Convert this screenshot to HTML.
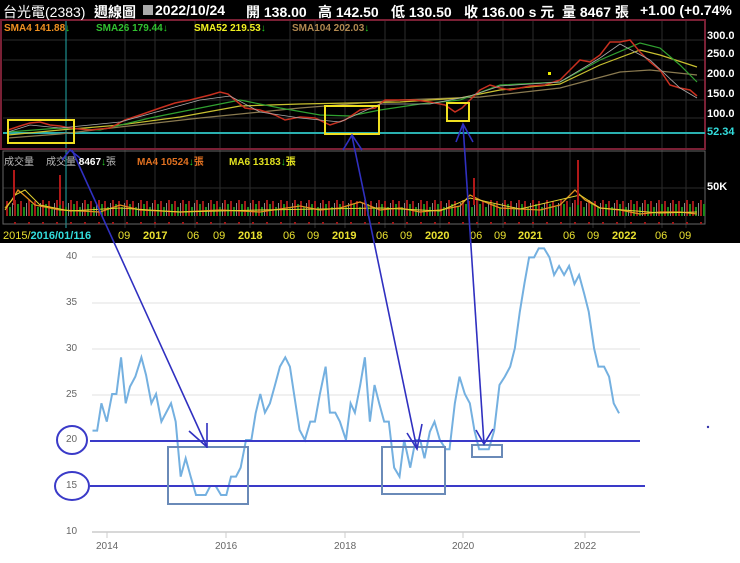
<!DOCTYPE html>
<html><head><meta charset="utf-8"><style>
*{margin:0;padding:0}
body{width:740px;height:563px;background:#fff;position:relative;overflow:hidden;font-family:"Liberation Sans","Noto Sans CJK TC",sans-serif}
#top{position:absolute;left:0;top:0;width:740px;height:243px;background:#000}
.t{position:absolute;white-space:nowrap;color:#fff;font-weight:bold;font-size:14px;top:2px}
.s{position:absolute;white-space:nowrap;font-weight:bold;font-size:10px;top:23px}
.d{position:absolute;white-space:nowrap;font-weight:bold;font-size:11px;top:230px;color:#e8e030}
.r{position:absolute;white-space:nowrap;font-weight:bold;font-size:11px;color:#fff;left:707px}
.g{position:absolute;font-size:10px;color:#666}
</style></head><body>
<div id="top">
<svg width="740" height="243" style="position:absolute;left:0;top:0">
<defs><pattern id="vb" width="14" height="24" patternUnits="userSpaceOnUse">
<rect x="0" y="6" width="2" height="18" fill="#a01818"/><rect x="3" y="12" width="2" height="12" fill="#1a8a1a"/><rect x="6" y="9" width="2" height="15" fill="#a01818"/><rect x="9" y="15" width="2" height="9" fill="#1a8a1a"/><rect x="12" y="11" width="1" height="13" fill="#888"/></pattern></defs>
<g stroke="#2b2b2b" stroke-width="1">
<line x1="66" y1="21" x2="66" y2="228"/><line x1="125" y1="21" x2="125" y2="228"/><line x1="155" y1="21" x2="155" y2="228"/><line x1="195" y1="21" x2="195" y2="228"/><line x1="220" y1="21" x2="220" y2="228"/><line x1="250" y1="21" x2="250" y2="228"/><line x1="290" y1="21" x2="290" y2="228"/><line x1="315" y1="21" x2="315" y2="228"/><line x1="345" y1="21" x2="345" y2="228"/><line x1="385" y1="21" x2="385" y2="228"/><line x1="405" y1="21" x2="405" y2="228"/><line x1="440" y1="21" x2="440" y2="228"/><line x1="478" y1="21" x2="478" y2="228"/><line x1="503" y1="21" x2="503" y2="228"/><line x1="533" y1="21" x2="533" y2="228"/><line x1="570" y1="21" x2="570" y2="228"/><line x1="593" y1="21" x2="593" y2="228"/><line x1="625" y1="21" x2="625" y2="228"/><line x1="662" y1="21" x2="662" y2="228"/><line x1="686" y1="21" x2="686" y2="228"/>
<line x1="3" y1="40" x2="705" y2="40"/><line x1="3" y1="60" x2="705" y2="60"/><line x1="3" y1="80" x2="705" y2="80"/><line x1="3" y1="100" x2="705" y2="100"/><line x1="3" y1="118" x2="705" y2="118"/><line x1="3" y1="188" x2="705" y2="188"/>
</g>
<line x1="66" y1="21" x2="66" y2="228" stroke="#2aa" />
<rect x="1" y="20" width="704" height="129" fill="none" stroke="#7a2035" stroke-width="2"/>
<rect x="3" y="151" width="702" height="73" fill="none" stroke="#666" stroke-width="1"/>
<line x1="3" y1="133" x2="705" y2="133" stroke="#2ab0b0" stroke-width="2"/>
<polyline fill="none" stroke="#8a7a50" stroke-width="1.2" points="8,138 60,134 120,127 200,118 300,108 400,100 480,97 560,88 620,72 650,70 697,75"/>
<polyline fill="none" stroke="#c8c030" stroke-width="1.2" points="8,135 60,130 120,125 180,117 240,106 300,104 350,103 400,102 460,98 500,90 560,84 600,65 640,50 660,55 697,67"/>
<polyline fill="none" stroke="#30a030" stroke-width="1.2" points="8,132 60,128 100,130 150,118 200,108 240,100 280,108 320,115 350,116 380,110 420,104 460,100 500,85 560,82 600,60 640,43 660,48 680,65 697,82"/>
<polyline fill="none" stroke="#c83020" stroke-width="1.5" points="8,130 20,126 30,123 40,122 50,125 60,126 70,128 90,130 110,128 125,120 140,115 160,108 175,103 190,100 210,95 220,92 228,94 235,100 245,108 260,110 275,115 285,120 300,117 315,118 330,125 345,120 360,110 375,108 385,100 400,100 415,100 430,102 445,105 455,112 462,108 470,100 480,90 490,85 500,88 510,90 530,86 545,85 560,80 570,70 580,60 590,62 600,55 610,42 620,42 630,40 640,52 650,62 660,70 670,85 680,88 690,90 697,96"/>
<polyline fill="none" stroke="#aaa" stroke-width="0.8" points="8,132 30,125 60,128 120,122 200,100 230,96 260,112 300,118 340,122 380,104 430,104 470,96 500,86 560,82 600,58 620,44 650,60 680,88 697,98"/>
<rect x="548" y="72" width="3" height="3" fill="#ee0"/>
<rect x="8" y="120" width="66" height="23" fill="none" stroke="#f0e020" stroke-width="2"/>
<rect x="325" y="106" width="54" height="28" fill="none" stroke="#f0e020" stroke-width="2"/>
<rect x="447" y="103" width="22" height="18" fill="none" stroke="#f0e020" stroke-width="2"/>
<rect x="5" y="200" width="700" height="24" fill="url(#vb)"/>
<polyline fill="none" stroke="#e09020" stroke-width="1.3" points="5,208 12,200 18,190 25,196 35,205 60,210 100,212 120,205 140,210 180,212 220,210 260,212 300,206 320,210 340,208 360,202 380,210 400,208 420,212 440,210 460,206 470,195 480,200 500,208 540,210 560,205 575,190 585,200 600,208 620,210 640,214 660,212 680,212 697,214"/>
<polyline fill="none" stroke="#e0d030" stroke-width="1" points="5,210 15,195 25,190 40,205 70,211 120,208 180,212 260,210 320,209 380,208 440,211 470,198 520,209 580,195 600,208 660,213 697,212"/>
<line x1="60" y1="175" x2="60" y2="205" stroke="#b01818" stroke-width="2"/>
<line x1="578" y1="160" x2="578" y2="205" stroke="#b01818" stroke-width="2"/>
<line x1="14" y1="170" x2="14" y2="205" stroke="#b01818" stroke-width="2"/>
<line x1="474" y1="178" x2="474" y2="205" stroke="#b01818" stroke-width="2"/>
</svg>
<div class="t" style="left:3px;font-weight:normal">台光電(2383)</div>
<div class="t" style="left:94px">週線圖</div>
<div style="position:absolute;left:143px;top:5px;width:10px;height:10px;background:#aaa"></div>
<div class="t" style="left:155px">2022/10/24</div>
<div class="t" style="left:246px">開 138.00</div>
<div class="t" style="left:318px">高 142.50</div>
<div class="t" style="left:391px">低 130.50</div>
<div class="t" style="left:464px">收 136.00 s 元</div>
<div class="t" style="left:562px">量 8467 張</div>
<div class="t" style="left:640px">+1.00 (+0.74%</div>
<div class="s" style="left:4px;top:23px;color:#f09020">SMA4 141.88<span style="color:#2c2">↓</span></div>
<div class="s" style="left:96px;color:#30c030">SMA26 179.44<span style="color:#2c2">↓</span></div>
<div class="s" style="left:194px;color:#f0f020">SMA52 219.53<span style="color:#2c2">↓</span></div>
<div class="s" style="left:292px;color:#b08850">SMA104 202.03<span style="color:#2c2">↓</span></div>
<div class="r" style="top:30px">300.0</div>
<div class="r" style="top:48px">250.0</div>
<div class="r" style="top:68px">200.0</div>
<div class="r" style="top:88px">150.0</div>
<div class="r" style="top:108px">100.0</div>
<div class="r" style="top:126px;color:#3dd">52.34</div>
<div class="r" style="top:181px">50K</div>
<div class="s" style="left:4px;top:153px;color:#bbb;font-weight:normal">成交量</div>
<div class="s" style="left:46px;top:153px;color:#bbb;font-weight:normal">成交量 <b style="color:#fff">8467</b><span style="color:#2c2">↓</span>張</div>
<div class="s" style="left:137px;top:153px;color:#e07020">MA4 10524<span style="color:#2c2">↓</span>張</div>
<div class="s" style="left:229px;top:153px;color:#e0e020">MA6 13183<span style="color:#2c2">↓</span>張</div>
<div class="d" style="left:3px;font-weight:normal">2015/<b style="color:#3dd">2016/01/116</b></div>
<div class="d" style="left:118px;font-weight:normal">09</div><div class="d" style="left:143px">2017</div>
<div class="d" style="left:187px;font-weight:normal">06</div><div class="d" style="left:213px;font-weight:normal">09</div><div class="d" style="left:238px">2018</div>
<div class="d" style="left:283px;font-weight:normal">06</div><div class="d" style="left:307px;font-weight:normal">09</div><div class="d" style="left:332px">2019</div>
<div class="d" style="left:376px;font-weight:normal">06</div><div class="d" style="left:400px;font-weight:normal">09</div><div class="d" style="left:425px">2020</div>
<div class="d" style="left:470px;font-weight:normal">06</div><div class="d" style="left:494px;font-weight:normal">09</div><div class="d" style="left:518px">2021</div>
<div class="d" style="left:563px;font-weight:normal">06</div><div class="d" style="left:587px;font-weight:normal">09</div><div class="d" style="left:612px">2022</div>
<div class="d" style="left:655px;font-weight:normal">06</div><div class="d" style="left:679px;font-weight:normal">09</div>
</div>

<svg width="740" height="563" style="position:absolute;left:0;top:0">
<g stroke="#e2e2e2" stroke-width="1">
<line x1="92" y1="257" x2="640" y2="257"/><line x1="92" y1="303" x2="640" y2="303"/><line x1="92" y1="349" x2="640" y2="349"/><line x1="92" y1="395" x2="640" y2="395"/>
</g>
<line x1="92" y1="532" x2="640" y2="532" stroke="#ccc" stroke-width="1.5"/>
<g stroke="#ccc"><line x1="107" y1="532" x2="107" y2="538"/><line x1="226" y1="532" x2="226" y2="538"/><line x1="345" y1="532" x2="345" y2="538"/><line x1="463" y1="532" x2="463" y2="538"/><line x1="585" y1="532" x2="585" y2="538"/></g>
<g transform="translate(80,240) scale(0.357,0.3333)">
<polyline fill="none" stroke="#74b0e0" stroke-width="2" vector-effect="non-scaling-stroke" points="35,572 48,572 60,490 75,545 90,462 102,462 115,352 128,490 140,440 155,410 172,352 185,405 200,490 213,462 228,545 255,490 268,545 282,710 296,655 310,710 325,765 352,765 365,738 380,738 395,765 410,765 423,710 437,710 450,683 465,600 480,600 492,520 505,462 518,518 532,490 545,440 560,380 575,352 588,380 600,465 615,570 630,600 645,545 658,545 672,462 688,380 700,518 715,518 728,545 745,600 758,490 770,518 785,435 798,352 812,545 825,435 838,490 852,545 865,545 880,683 895,710 908,600 925,683 940,600 953,600 965,655 980,575 993,545 1008,600 1025,628 1035,628 1050,490 1063,410 1078,462 1092,490 1105,572 1118,628 1145,628 1160,572 1175,435 1190,410 1205,380 1218,325 1232,215 1245,130 1258,52 1272,52 1285,25 1300,25 1315,52 1328,105 1342,78 1356,105 1370,78 1385,132 1398,105 1412,160 1425,215 1440,325 1452,380 1468,380 1482,410 1495,490 1510,520"/>
</g>
<g stroke="#3a3ac8" stroke-width="2" fill="none">
<line x1="90" y1="441" x2="640" y2="441"/><line x1="90" y1="486" x2="645" y2="486"/>
<ellipse cx="72" cy="440" rx="15" ry="14"/><ellipse cx="72" cy="486" rx="17" ry="14"/>
</g>
<g stroke="#6a8ab8" stroke-width="2" fill="none">
<rect x="168" y="447" width="80" height="57"/><rect x="382" y="447" width="63" height="47"/><rect x="472" y="445" width="30" height="12"/>
</g>
<g stroke="#3030c0" stroke-width="1.6" fill="none">
<line x1="72" y1="150" x2="207" y2="447"/><polyline points="189,431 207,447"/><line x1="207" y1="423" x2="207" y2="448"/>
<polyline points="62,160 70,150 80,158"/>
<line x1="352" y1="136" x2="417" y2="449"/><polyline points="407,433 417,449 422,424"/>
<polyline points="343,150 352,135 362,150"/>
<line x1="463" y1="125" x2="484" y2="444"/><polyline points="476,430 484,444 493,429"/>
<polyline points="456,142 463,124 473,142"/>
</g>
<circle cx="708" cy="427" r="1.2" fill="#33a"/>
</svg>
<div class="g" style="left:66px;top:251px">40</div>
<div class="g" style="left:66px;top:297px">35</div>
<div class="g" style="left:66px;top:343px">30</div>
<div class="g" style="left:66px;top:389px">25</div>
<div class="g" style="left:66px;top:434px">20</div>
<div class="g" style="left:66px;top:480px">15</div>
<div class="g" style="left:66px;top:526px">10</div>
<div class="g" style="left:96px;top:541px">2014</div>
<div class="g" style="left:215px;top:541px">2016</div>
<div class="g" style="left:334px;top:541px">2018</div>
<div class="g" style="left:452px;top:541px">2020</div>
<div class="g" style="left:574px;top:541px">2022</div>
</body></html>
